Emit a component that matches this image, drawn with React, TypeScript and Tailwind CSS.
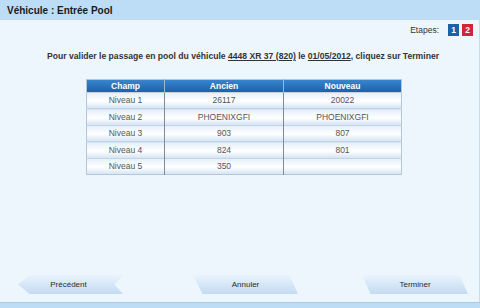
import React from 'react';

const rows = [
  { champ: 'Niveau 1', ancien: '26117', nouveau: '20022' },
  { champ: 'Niveau 2', ancien: 'PHOENIXGFI', nouveau: 'PHOENIXGFI' },
  { champ: 'Niveau 3', ancien: '903', nouveau: '807' },
  { champ: 'Niveau 4', ancien: '824', nouveau: '801' },
  { champ: 'Niveau 5', ancien: '350', nouveau: '' },
];

const App: React.FC = () => {
  return (
    <div className="w-[480px] h-[308px] flex flex-col bg-[#eef6fd] font-['Liberation_Sans',Arial,sans-serif] overflow-hidden">
      {/* Header */}
      <div className="h-[20px] shrink-0 bg-[#bddcf6] flex items-center px-[7px]">
        <span className="text-[10px] font-bold text-[#1a1a1a]">Véhicule : Entrée Pool</span>
      </div>

      {/* Body */}
      <div className="flex-1 flex flex-col border-r border-[#c9dcec]">
        {/* Etapes */}
        <div className="flex items-center justify-end gap-[3px] pt-[4px] pr-[6px] h-[16px]">
          <span className="text-[8.5px] text-[#333] mr-[6px]">Etapes:</span>
          <span className="w-[11px] h-[12px] bg-[#1961a8] text-white text-[8.5px] font-bold flex items-center justify-center">1</span>
          <span className="w-[11px] h-[12px] bg-[#d1243a] text-white text-[8.5px] font-bold flex items-center justify-center">2</span>
        </div>

        {/* Message */}
        <p className="mt-[14px] pl-[7px] text-center text-[8.6px] font-bold text-[#333]">
          Pour valider le passage en pool du véhicule <span className="underline">4448 XR 37 (820)</span> le{' '}
          <span className="underline">01/05/2012</span>, cliquez sur Terminer
        </p>

        {/* Table */}
        <table className="mt-[16px] ml-[86px] w-[316px] border-collapse border border-[#b4c7d8] text-[8.5px]">
          <thead>
            <tr className="h-[12px] bg-gradient-to-b from-[#3b88cf] to-[#1b62ac] text-white font-bold">
              <th className="w-[78px] border-r border-[#9fb6cb] font-bold leading-[12px]">Champ</th>
              <th className="w-[119px] border-r border-[#9fb6cb] font-bold leading-[12px]">Ancien</th>
              <th className="font-bold leading-[12px]">Nouveau</th>
            </tr>
          </thead>
          <tbody>
            {rows.map(r => (
              <tr
                key={r.champ}
                className="h-[16.5px] bg-gradient-to-b from-[#e6f0f9] via-white to-[#cfe2f3] border-t border-[#c3d3e2] text-[#555] text-center"
              >
                <td className="border-r border-[#7d8c9a]">{r.champ}</td>
                <td className="border-r border-[#7d8c9a]">{r.ancien}</td>
                <td>{r.nouveau}</td>
              </tr>
            ))}
          </tbody>
        </table>

        {/* Buttons */}
        <div className="mt-auto mb-[8px] flex items-center text-[8px] text-[#2a2a2a]">
          <div className="ml-[18px] w-[105px] h-[19px] bg-gradient-to-b from-[#e9f3fc] to-[#c3dbf2] [clip-path:polygon(0_50%,11%_0,100%_0,92%_50%,100%_100%,11%_100%)] flex items-center justify-center pr-[4px]">
            Précédent
          </div>
          <div className="ml-[70px] w-[105px] h-[19px] bg-gradient-to-b from-[#e9f3fc] to-[#c3dbf2] [clip-path:polygon(0_0,92%_0,100%_100%,9%_100%)] flex items-center justify-center">
            Annuler
          </div>
          <div className="ml-[64px] w-[106px] h-[19px] bg-gradient-to-b from-[#e9f3fc] to-[#c3dbf2] [clip-path:polygon(0_0,92%_0,100%_100%,8%_100%)] flex items-center justify-center">
            Terminer
          </div>
        </div>
      </div>

      {/* Bottom bar */}
      <div className="h-[6px] shrink-0 bg-[#bddcf6] border-t border-[#a9cbe8]" />
    </div>
  );
};

export default App;
